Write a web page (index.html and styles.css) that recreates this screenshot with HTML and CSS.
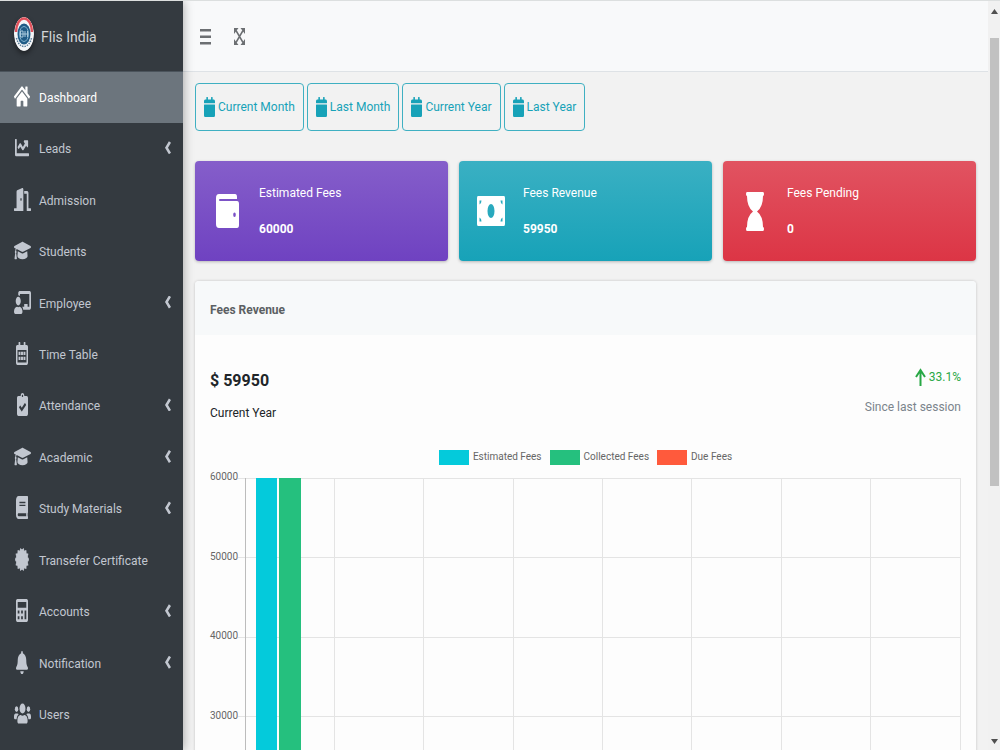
FILE: index.html
```html
<!doctype html>
<html lang="en">
<head>
    <meta charset="UTF-8">
    <meta name="viewport" content="width=device-width, initial-scale=1.0">
    <title>Flis India - Dashboard</title>
    <link rel="stylesheet" href="styles.css">
</head>
<body>
    <!-- Sidebar -->
    <aside class="sidebar">
        <a class="brand" href="#">
            <svg class="brand-logo" viewBox="0 0 40 68" preserveAspectRatio="none">
                <ellipse cx="20" cy="34" rx="20" ry="34" fill="#f4f6f8"/>
                <path d="M4 30A16 27 0 0 1 36 30" fill="none" stroke="#e0525c" stroke-width="5"/>
                <path d="M5 42A16 26 0 0 0 35 42" fill="none" stroke="#5b7f9c" stroke-width="3" stroke-dasharray="3 2"/>
                <ellipse cx="20" cy="34" rx="13" ry="21" fill="#1f5b86"/>
                <ellipse cx="20" cy="34" rx="9" ry="15" fill="none" stroke="#7fb0cc" stroke-width="2"/>
                <path d="M13 28h5v12h-5zM22 28v12M27 28v12M13 34h14" fill="none" stroke="#a9c9dc" stroke-width="2"/>
            </svg>
            <span>Flis India</span>
        </a>
        <nav class="menu">
            <a class="menu-item active" href="#">
                <span class="menu-icon"><svg class="icon w16" viewBox="0 0 576 512" preserveAspectRatio="none"><path d="M280.37 148.26L96 300.11V464a16 16 0 0 0 16 16l112.06-.29a16 16 0 0 0 15.92-16V368a16 16 0 0 1 16-16h64a16 16 0 0 1 16 16v95.64a16 16 0 0 0 16 16.05L464 480a16 16 0 0 0 16-16V300L295.67 148.26a12.19 12.19 0 0 0-15.3 0zM571.6 251.47L488 182.56V44.05a12 12 0 0 0-12-12h-56a12 12 0 0 0-12 12v72.61L318.47 43a48 48 0 0 0-61 0L4.34 251.47a12 12 0 0 0-1.6 16.9l25.5 31A12 12 0 0 0 45.15 301l235.22-193.74a12.19 12.19 0 0 1 15.3 0L530.9 301a12 12 0 0 0 16.9-1.6l25.5-31a12 12 0 0 0-1.7-16.93z"/></svg></span>
                Dashboard
            </a>
            <a class="menu-item has-sub" href="#">
                <span class="menu-icon"><svg class="icon w14" viewBox="0 0 512 512" preserveAspectRatio="none"><path d="M496 384H64V80c0-8.84-7.16-16-16-16H16C7.16 64 0 71.16 0 80v336c0 17.67 14.33 32 32 32h464c8.84 0 16-7.16 16-16v-32c0-8.84-7.16-16-16-16zM464 96H345.94c-21.38 0-32.09 25.85-16.97 40.97l32.4 32.4L288 242.75l-73.37-73.37c-12.5-12.5-32.76-12.5-45.25 0l-68.69 68.69c-6.25 6.25-6.25 16.38 0 22.63l22.62 22.62c6.25 6.25 16.38 6.25 22.63 0L192 237.25l73.37 73.37c12.5 12.5 32.76 12.5 45.25 0l96-96 32.4 32.4c15.12 15.12 40.97 4.41 40.97-16.97V112c.01-8.84-7.15-16-15.99-16z"/></svg></span>
                Leads
            </a>
            <a class="menu-item" href="#">
                <span class="menu-icon"><svg class="icon w17" viewBox="0 0 640 512" preserveAspectRatio="none"><path fill-rule="evenodd" d="M624 448h-80V113c0-27-21-49-48-49H384v64h96v384h144c9 0 16-7 16-16v-32c0-9-7-16-16-16zM312 1L120 51c-14 4-24 17-24 32v365H16c-9 0-16 7-16 16v32c0 9 7 16 16 16h336V33c0-22-19-37-40-32zM264 288c-13 0-24-14-24-32s11-32 24-32 24 14 24 32-11 32-24 32z"/></svg></span>
                Admission
            </a>
            <a class="menu-item" href="#">
                <span class="menu-icon"><svg class="icon w17" viewBox="0 0 640 512" preserveAspectRatio="none"><path d="M622.34 153.2L343.4 67.5c-15.2-4.67-31.6-4.67-46.79 0L17.66 153.2c-23.54 7.23-23.54 38.36 0 45.59l48.63 14.94c-10.67 13.19-17.23 29.28-17.88 46.9C38.78 266.15 32 276.11 32 288c0 10.78 5.68 19.85 13.86 25.65L20.33 428.53C18.11 438.52 25.71 448 35.94 448h56.11c10.24 0 17.84-9.48 15.62-19.47L82.14 313.65C90.32 307.85 96 298.78 96 288c0-11.57-6.47-21.25-15.66-26.87.76-15.02 8.44-28.3 20.69-36.72L296.6 284.5c9.06 2.78 26.44 6.25 46.79 0l278.95-85.7c23.55-7.24 23.55-38.36 0-45.6zM352.79 315.09c-28.53 8.76-52.84 3.92-65.59 0l-145.02-44.55L128 384c0 35.35 85.96 64 192 64s192-28.65 192-64l-14.18-113.47-145.03 44.56z"/></svg></span>
                Students
            </a>
            <a class="menu-item has-sub" href="#">
                <span class="menu-icon"><svg class="icon w17" viewBox="0 0 640 512" preserveAspectRatio="none"><path d="M208 352c-2.39 0-4.78.35-7.06 1.09C187.98 357.3 174.35 360 160 360c-14.35 0-27.98-2.7-40.95-6.91-2.28-.74-4.66-1.09-7.05-1.09C49.94 352-.33 402.48 0 464.62.14 490.88 21.73 512 48 512h224c26.27 0 47.86-21.12 48-47.38.33-62.14-49.94-112.62-112-112.62zm-48-32c53.02 0 96-42.98 96-96s-42.98-96-96-96-96 42.98-96 96 42.98 96 96 96zM592 0H208c-26.47 0-48 22.25-48 49.59V96c23.42 0 45.1 6.78 64 17.8V64h352v288h-64v-64H384v64h-76.24c19.1 16.69 33.12 38.73 39.69 64H592c26.47 0 48-22.25 48-49.59V49.59C640 22.25 618.47 0 592 0z"/></svg></span>
                Employee
            </a>
            <a class="menu-item" href="#">
                <span class="menu-icon"><svg class="icon w12" viewBox="0 0 448 512" preserveAspectRatio="none"><path fill-rule="evenodd" d="M48 64h48V12c0-7 5-12 12-12h40c7 0 12 5 12 12v52h128V12c0-7 5-12 12-12h40c7 0 12 5 12 12v52h48c27 0 48 21 48 48v352c0 27-21 48-48 48H48c-27 0-48-21-48-48V112c0-27 21-48 48-48zM56 180v276h336V180zM96 216h72v72H96zM188 216h72v72h-72zM280 216h72v72h-72zM96 328h72v72H96zM188 328h72v72h-72zM280 328h72v72h-72z"/></svg></span>
                Time Table
            </a>
            <a class="menu-item has-sub" href="#">
                <span class="menu-icon"><svg class="icon w11" viewBox="0 0 384 512" preserveAspectRatio="none"><path fill-rule="evenodd" d="M336 64h-80c0-35-29-64-64-64s-64 29-64 64H48C21 64 0 85 0 112v352c0 27 21 48 48 48h288c27 0 48-21 48-48V112c0-27-21-48-48-48zM192 40c13 0 24 11 24 24s-11 24-24 24-24-11-24-24 11-24 24-24zM313 272L175 409c-5 5-12 5-17 0l-82-82c-5-5-5-12 0-17l29-28c4-5 12-5 16 0l46 46 101-101c5-5 12-5 17 0l28 28c5 5 5 13 0 17z"/></svg></span>
                Attendance
            </a>
            <a class="menu-item has-sub" href="#">
                <span class="menu-icon"><svg class="icon w17" viewBox="0 0 640 512" preserveAspectRatio="none"><path d="M622.34 153.2L343.4 67.5c-15.2-4.67-31.6-4.67-46.79 0L17.66 153.2c-23.54 7.23-23.54 38.36 0 45.59l48.63 14.94c-10.67 13.19-17.23 29.28-17.88 46.9C38.78 266.15 32 276.11 32 288c0 10.78 5.68 19.85 13.86 25.65L20.33 428.53C18.11 438.52 25.71 448 35.94 448h56.11c10.24 0 17.84-9.48 15.62-19.47L82.14 313.65C90.32 307.85 96 298.78 96 288c0-11.57-6.47-21.25-15.66-26.87.76-15.02 8.44-28.3 20.69-36.72L296.6 284.5c9.06 2.78 26.44 6.25 46.79 0l278.95-85.7c23.55-7.24 23.55-38.36 0-45.6zM352.79 315.09c-28.53 8.76-52.84 3.92-65.59 0l-145.02-44.55L128 384c0 35.35 85.96 64 192 64s192-28.65 192-64l-14.18-113.47-145.03 44.56z"/></svg></span>
                Academic
            </a>
            <a class="menu-item has-sub" href="#">
                <span class="menu-icon"><svg class="icon w12" viewBox="0 0 448 512" preserveAspectRatio="none"><path d="M448 360V24c0-13.3-10.7-24-24-24H96C43 0 0 43 0 96v320c0 53 43 96 96 96h328c13.3 0 24-10.7 24-24v-16c0-7.5-3.5-14.3-8.9-18.7-4.2-15.4-4.2-59.3 0-74.7 5.4-4.3 8.9-11.1 8.9-18.6zM128 134c0-3.3 2.7-6 6-6h212c3.3 0 6 2.7 6 6v20c0 3.3-2.7 6-6 6H134c-3.3 0-6-2.7-6-6v-20zm0 64c0-3.3 2.7-6 6-6h212c3.3 0 6 2.7 6 6v20c0 3.3-2.7 6-6 6H134c-3.3 0-6-2.7-6-6v-20zm253.4 250H96c-17.7 0-32-14.3-32-32 0-17.6 14.4-32 32-32h285.4c-1.9 17.1-1.9 46.9 0 64z"/></svg></span>
                Study Materials
            </a>
            <a class="menu-item" href="#">
                <span class="menu-icon"><svg class="icon w14" viewBox="0 0 512 512" preserveAspectRatio="none"><path stroke="currentColor" stroke-width="24" stroke-linejoin="round" d="M256 50L310 14l28 62 66-18 4 70 68 4-18 66 44 58-44 58 18 66-68 4-4 70-66-18-28 62-54-36-54 36-28-62-66 18-4-70-68-4 18-66-44-58 44-58-18-66 68-4 4-70 66 18 28-62z"/></svg></span>
                Transefer Certificate
            </a>
            <a class="menu-item has-sub" href="#">
                <span class="menu-icon"><svg class="icon w12" viewBox="0 0 448 512" preserveAspectRatio="none"><path fill-rule="evenodd" d="M48 0h352c26 0 48 22 48 48v416c0 26-22 48-48 48H48c-26 0-48-22-48-48V48C0 22 22 0 48 0zM64 64v128h320V64zM64 256v64h64v-64zM192 256v64h64v-64zM320 256v192h64V256zM64 384v64h64v-64zM192 384v64h64v-64z"/></svg></span>
                Accounts
            </a>
            <a class="menu-item has-sub" href="#">
                <span class="menu-icon"><svg class="icon w12" viewBox="0 0 448 512" preserveAspectRatio="none"><path d="M224 512c35.32 0 63.97-28.65 63.97-64H160.03c0 35.35 28.65 64 63.97 64zm215.39-149.71c-19.32-20.76-55.47-51.99-55.47-154.29 0-77.7-54.48-139.9-127.94-155.16V32c0-17.67-14.32-32-31.98-32s-31.98 14.33-31.98 32v20.84C118.56 68.1 64.08 130.3 64.08 208c0 102.3-36.15 133.53-55.47 154.29-6 6.45-8.66 14.16-8.61 21.71.11 16.4 12.98 32 32.1 32h383.8c19.12 0 32-15.6 32.1-32 .05-7.55-2.61-15.27-8.61-21.71z"/></svg></span>
                Notification
            </a>
            <a class="menu-item" href="#">
                <span class="menu-icon"><svg class="icon w17" viewBox="0 0 640 512" preserveAspectRatio="none"><circle cx="96" cy="160" r="64"/><circle cx="544" cy="160" r="64"/><circle cx="320" cy="144" r="112"/><path d="M64 256h64c18 0 34 7 45 19-40 22-69 62-75 109H32c-18 0-32-14-32-32v-32c0-35 29-64 64-64zM576 256h-64c-18 0-34 7-45 19 40 22 69 62 75 109h66c18 0 32-14 32-32v-32c0-35-29-64-64-64zM243 288h8c44 21 94 21 138 0h8c64 0 115 52 115 115v29c0 27-21 48-48 48H176c-27 0-48-21-48-48v-29c0-63 51-115 115-115z"/></svg></span>
                Users
            </a>
        </nav>
    </aside>

    <!-- Page -->
    <div class="page">
        <header class="topbar">
            <button class="tool" aria-label="Toggle menu">
                <svg class="tool-icon" viewBox="0 0 11 17"><path d="M0 1h11v2.500H0zM0 7.500h11V10H0zM0 14h11v2.500H0z"/></svg>
            </button>
            <button class="tool" aria-label="Full screen">
                <svg class="tool-icon" viewBox="0 0 11 17"><path d="M2 2.500l7 12M9 2.500l-7 12" fill="none" stroke="currentColor" stroke-width="1.500"/><path d="M0 0h4.500L0 6zM11 0H6.500L11 6zM0 17h4.500L0 11zM11 17H6.500L11 11z"/></svg>
            </button>
        </header>

        <main class="content">
            <div class="filters">
                <button class="filter"><svg class="filter-icon" viewBox="0 0 448 512" preserveAspectRatio="none"><path d="M12 192h424c7 0 12 5 12 12v260c0 27-21 48-48 48H48c-27 0-48-21-48-48V204c0-7 5-12 12-12zM448 148v-36c0-27-21-48-48-48h-48V12c0-7-5-12-12-12h-40c-7 0-12 5-12 12v52H160V12c0-7-5-12-12-12h-40c-7 0-12 5-12 12v52H48c-27 0-48 21-48 48v36c0 7 5 12 12 12h424c7 0 12-5 12-12z"/></svg>Current Month</button>
                <button class="filter"><svg class="filter-icon" viewBox="0 0 448 512" preserveAspectRatio="none"><path d="M12 192h424c7 0 12 5 12 12v260c0 27-21 48-48 48H48c-27 0-48-21-48-48V204c0-7 5-12 12-12zM448 148v-36c0-27-21-48-48-48h-48V12c0-7-5-12-12-12h-40c-7 0-12 5-12 12v52H160V12c0-7-5-12-12-12h-40c-7 0-12 5-12 12v52H48c-27 0-48 21-48 48v36c0 7 5 12 12 12h424c7 0 12-5 12-12z"/></svg>Last Month</button>
                <button class="filter"><svg class="filter-icon" viewBox="0 0 448 512" preserveAspectRatio="none"><path d="M12 192h424c7 0 12 5 12 12v260c0 27-21 48-48 48H48c-27 0-48-21-48-48V204c0-7 5-12 12-12zM448 148v-36c0-27-21-48-48-48h-48V12c0-7-5-12-12-12h-40c-7 0-12 5-12 12v52H160V12c0-7-5-12-12-12h-40c-7 0-12 5-12 12v52H48c-27 0-48 21-48 48v36c0 7 5 12 12 12h424c7 0 12-5 12-12z"/></svg>Current Year</button>
                <button class="filter"><svg class="filter-icon" viewBox="0 0 448 512" preserveAspectRatio="none"><path d="M12 192h424c7 0 12 5 12 12v260c0 27-21 48-48 48H48c-27 0-48-21-48-48V204c0-7 5-12 12-12zM448 148v-36c0-27-21-48-48-48h-48V12c0-7-5-12-12-12h-40c-7 0-12 5-12 12v52H160V12c0-7-5-12-12-12h-40c-7 0-12 5-12 12v52H48c-27 0-48 21-48 48v36c0 7 5 12 12 12h424c7 0 12-5 12-12z"/></svg>Last Year</button>
            </div>

            <!-- Totals -->
            <div class="stats">
                <section class="stat purple">
                    <div class="stat-icon"><svg width="23" height="34" viewBox="0 0 23 34"><path fill-rule="evenodd" d="M3 0h16q2 0 2 3v2H4q-1 0-1 1t1 1h17q2 0 2 3v21q0 3-2 3H3q-3 0-3-4V4q0-4 3-4zM18.500 18.500a1.300 2.200 0 0 0 0 4.400a1.300 2.200 0 0 0 0-4.400z"/></svg></div>
                    <div class="stat-text"><span>Estimated Fees</span><strong>60000</strong></div>
                </section>
                <section class="stat teal">
                    <div class="stat-icon"><svg width="28" height="30" viewBox="0 0 28 30"><path fill-rule="evenodd" d="M1 0h26q1 0 1 2v26q0 2-1 2H1q-1 0-1-2V2q0-2 1-2zM14 8a3.500 7 0 0 0 0 14a3.500 7 0 0 0 0-14zM2.500 4.500v4q2-1 2-4zM25.500 4.500v4q-2-1-2-4zM2.500 25.500v-4q2 1 2 4zM25.500 25.500v-4q-2 1-2 4z"/></svg></div>
                    <div class="stat-text"><span>Fees Revenue</span><strong>59950</strong></div>
                </section>
                <section class="stat red">
                    <div class="stat-icon"><svg width="18" height="39" viewBox="0 0 18 39"><path d="M1 0h16q1 0 1 2t-1 2q0 11-6 15.500Q17 24 17 35q1 0 1 2t-1 2H1q-1 0-1-2t1-2Q1 24 7 19.500 1 15 1 4 0 4 0 2t1-2z"/></svg></div>
                    <div class="stat-text"><span>Fees Pending</span><strong>0</strong></div>
                </section>
            </div>

            <!-- Revenue chart -->
            <section class="card">
                <h2 class="card-header">Fees Revenue</h2>
                <div class="card-body">
                    <div class="summary">
                        <div class="summary-left">
                            <strong>$ 59950</strong>
                            <span>Current Year</span>
                        </div>
                        <div class="summary-right">
                            <span class="up"><svg width="11" height="18" viewBox="0 0 11 18"><path d="M5.500 2v16M1 9l4.500-7L10 9" fill="none" stroke="currentColor" stroke-width="2"/></svg>33.1%</span>
                            <span>Since last session</span>
                        </div>
                    </div>
                    <div class="legend">
                        <span class="key"><i class="swatch cyan"></i>Estimated Fees</span>
                        <span class="key"><i class="swatch green"></i>Collected Fees</span>
                        <span class="key"><i class="swatch orange"></i>Due Fees</span>
                    </div>
                    <div class="chart">
                        <div class="axis">
                            <span>60000</span>
                            <span>50000</span>
                            <span>40000</span>
                            <span>30000</span>
                        </div>
                        <svg class="plot">
                            <g class="grid-lines">
                                <line x1="-7" x2="100%" y1="0" y2="0"/>
                                <line x1="-7" x2="100%" y1="25%" y2="25%"/>
                                <line x1="-7" x2="100%" y1="50%" y2="50%"/>
                                <line x1="-7" x2="100%" y1="75%" y2="75%"/>
                                <line x1="12.5%" x2="12.5%" y1="0" y2="100%"/>
                                <line x1="25%" x2="25%" y1="0" y2="100%"/>
                                <line x1="37.5%" x2="37.5%" y1="0" y2="100%"/>
                                <line x1="50%" x2="50%" y1="0" y2="100%"/>
                                <line x1="62.5%" x2="62.5%" y1="0" y2="100%"/>
                                <line x1="75%" x2="75%" y1="0" y2="100%"/>
                                <line x1="87.5%" x2="87.5%" y1="0" y2="100%"/>
                                <line x1="100%" x2="100%" y1="0" y2="100%"/>
                            </g>
                            <line class="axis-line" x1="0" x2="0" y1="0" y2="100%"/>
                            <rect class="bar-cyan" x="1.5%" y="0" width="3%" height="100%"/>
                            <rect class="bar-green" x="4.7%" y="0" width="3.1%" height="100%"/>
                        </svg>
                    </div>
                </div>
            </section>
        </main>
    </div>

    <!-- Scroll track -->
    <div class="scroll">
        <svg class="scroll-arrow" viewBox="0 0 7 5"><path d="M0 5L3.500 0 7 5z"/></svg>
        <div class="scroll-thumb"></div>
        <svg class="scroll-arrow" viewBox="0 0 7 5"><path d="M0 0h7L3.500 5z"/></svg>
    </div>
</body>
</html>
```
FILE: styles.css
```css
* {
    box-sizing: border-box;
}
body {
    display: flex;
    height: 100vh;
    margin: 0;
    overflow: hidden;
    border-top: 1px solid #dcdfdf;
    background: #f2f2f2;
    font-family: Roboto, "Noto Sans", sans-serif;
    font-size: 12px;
    line-height: 24px;
    white-space: nowrap;
    color: #212529;
}
a {
    color: inherit;
    text-decoration: none;
}
button {
    font: inherit;
    cursor: pointer;
}
svg {
    fill: currentColor;
}

/* sidebar */
.sidebar {
    display: flex;
    flex-direction: column;
    flex: none;
    width: 183px;
    padding-bottom: 9px;
    background: #343a40;
    color: #c2c7d0;
    box-shadow: 0 0 10px rgba(0, 0, 0, 0.35);
    z-index: 1;
}
.brand {
    display: flex;
    align-items: center;
    gap: 7px;
    height: 71px;
    padding: 2px 14px 0;
    border-bottom: 1px solid #4b545c;
    font-size: 14px;
    color: #d3d5d7;
}
.brand-logo {
    width: 20px;
    height: 34px;
    margin-bottom: 6px;
    border-radius: 50%;
    box-shadow: 0 3px 5px rgba(0, 0, 0, 0.4);
}
.menu {
    display: grid;
    grid-auto-rows: 1fr;
    flex: 1;
}
.menu-item {
    display: flex;
    align-items: center;
    gap: 8px;
    padding: 0 12px 0 13px;
}
.menu-item.active {
    background: #6c757d;
    color: #fff;
}
.menu-icon {
    display: flex;
    justify-content: center;
    width: 18px;
    padding-bottom: 3px;
}
.icon {
    height: 23px;
}
.w11 { width: 11px; }
.w12 { width: 12px; }
.w14 { width: 14px; }
.w16 { width: 16px; }
.w17 { width: 17px; }
.has-sub::after {
    content: "";
    width: 6px;
    height: 13px;
    margin: 0 0 3px auto;
    background: #c2c7d0;
    clip-path: polygon(65% 0, 100% 12%, 50% 50%, 100% 88%, 65% 100%, 0 50%);
}

/* top bar */
.page {
    flex: 1;
    min-width: 0;
}
.topbar {
    display: flex;
    align-items: center;
    gap: 23px;
    height: 71px;
    padding: 0 17px;
    border-bottom: 1px solid #dee2e6;
    background: #f8f9fa;
}
.tool {
    padding: 0;
    border: 0;
    background: none;
    color: #6c6f72;
}
.tool-icon {
    display: block;
    width: 11px;
    height: 17px;
}
.content {
    padding: 11px 12px 0;
}

/* period buttons */
.filters {
    display: flex;
    gap: 3px;
    margin-bottom: 30px;
}
.filter {
    display: flex;
    align-items: center;
    gap: 3px;
    height: 48px;
    padding: 0 8px;
    border: 1px solid #3fb0c2;
    border-radius: 4px;
    background: none;
    color: #17a2b8;
}
.filter-icon {
    width: 11px;
    height: 20px;
}

/* totals */
.stats {
    display: grid;
    grid-template-columns: repeat(3, 1fr);
    gap: 11px;
    margin-bottom: 20px;
    color: #fff;
}
.stat {
    display: flex;
    align-items: center;
    height: 100px;
    border-radius: 4px;
    box-shadow: 0 1px 3px rgba(0, 0, 0, 0.25);
}
.stat-icon {
    display: flex;
    justify-content: center;
    width: 64px;
}
.stat-text {
    display: grid;
    gap: 12px;
}
.purple {
    background: linear-gradient(#855eca, #6f42c1);
}
.teal {
    background: linear-gradient(#3ab0c3, #17a2b8);
}
.red {
    background: linear-gradient(#e15361, #dc3545);
}

/* chart card */
.card {
    border-radius: 4px;
    background: #fdfdfd;
    box-shadow: 0 0 3px rgba(0, 0, 0, 0.2);
}
.card-header {
    margin: 0;
    padding: 17px 15px 13px;
    border-radius: 4px 4px 0 0;
    background: #f7f9fa;
    font-size: 12px;
    line-height: 24px;
    color: #5b5f63;
}
.card-body {
    padding: 30px 15px 0;
}
.summary {
    display: flex;
    justify-content: space-between;
}
.summary-left,
.summary-right {
    display: grid;
    align-content: start;
    row-gap: 4px;
}
.summary-left strong {
    font-size: 16px;
    line-height: 32px;
}
.summary-right {
    justify-items: end;
    row-gap: 6px;
    color: #7b848c;
}
.up {
    display: flex;
    align-items: center;
    gap: 3px;
    color: #28a745;
}
.legend {
    display: flex;
    justify-content: center;
    gap: 8px;
    margin-top: 20px;
    font-size: 10px;
    color: #666;
}
.key {
    display: flex;
    align-items: center;
    gap: 4px;
}
.swatch {
    width: 30px;
    height: 15px;
}
.cyan { background: #04cadb; }
.green { background: #25c07e; }
.orange { background: #ff5a3c; }
.chart {
    display: flex;
    gap: 6px;
    height: 318px;
    margin-top: 9px;
}
.axis {
    display: grid;
    grid-auto-rows: 1fr;
    width: 29px;
    margin-top: -13px;
    margin-bottom: 13px;
    padding-right: 1px;
    text-align: right;
    font-size: 10px;
    color: #666;
}
.plot {
    flex: 1;
    height: 100%;
    margin-right: 1px;
    overflow: visible;
    shape-rendering: crispEdges;
}
.grid-lines {
    stroke: #e4e4e4;
}
.axis-line {
    stroke: #bcbcbc;
}
.bar-cyan { fill: #04cadb; }
.bar-green { fill: #25c07e; }

/* scroll track */
.scroll {
    display: flex;
    flex-direction: column;
    align-items: flex-end;
    justify-content: space-between;
    flex: none;
    width: 12px;
    padding: 8px 1px 6px 0;
    background: #f1f1f1;
    color: #505050;
}
.scroll-arrow {
    width: 7px;
    height: 5px;
    margin-right: 1px;
}
.scroll-thumb {
    width: 9px;
    height: 61%;
    margin: 24px 0 auto;
    background: #c1c1c1;
}
```
